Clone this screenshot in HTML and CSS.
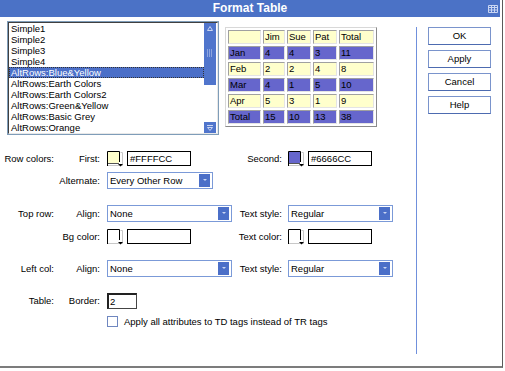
FILE: index.html
```html
<!DOCTYPE html>
<html lang="en">
<head>
  <meta charset="UTF-8">
  <title>Format Table</title>
  <link rel="stylesheet" href="styles.css">
</head>
<body>

  <div class="dialog">
    <!-- Title bar -->
    <div class="titlebar">
      <span class="title">Format Table</span>
      <svg class="grip" width="10" height="8" viewBox="0 0 10 8">
        <path d="M0.5 0.5h9v7h-9z M3.5 0.5v7 M6.5 0.5v7 M0.5 2.5h9 M0.5 5h9" fill="none" stroke="#c9d5f2" stroke-width="1"/>
      </svg>
    </div>

    <div class="body">
      <div class="main">
        <div class="top">
          <!-- Style list -->
          <div class="listbox">
            <div class="list-inner">
              <ul class="items">
                <li>Simple1</li>
                <li>Simple2</li>
                <li>Simple3</li>
                <li>Simple4</li>
                <li class="selected">AltRows:Blue&amp;Yellow</li>
                <li>AltRows:Earth Colors</li>
                <li>AltRows:Earth Colors2</li>
                <li>AltRows:Green&amp;Yellow</li>
                <li>AltRows:Basic Grey</li>
                <li>AltRows:Orange</li>
              </ul>
              <div class="scrollbar">
                <div class="thumb">
                  <svg width="12" height="62" viewBox="0 0 12 62">
                    <path d="M3.5 7.5h5L6 3.5z" fill="none" stroke="#c9d5f2"/>
                    <path d="M3 27h6M3 29h6M3 31h6M3 33h6" stroke="#c9d5f2" stroke-dasharray="1 1"/>
                  </svg>
                </div>
                <div class="sb-down">
                  <svg width="12" height="11" viewBox="0 0 12 11">
                    <path d="M3 3.5h6" stroke="#c9d5f2"/>
                    <path d="M3.5 5.5h5L6 8.5z" fill="none" stroke="#c9d5f2"/>
                  </svg>
                </div>
              </div>
            </div>
          </div>

          <!-- Preview -->
          <table class="preview">
            <tr class="yellow">
              <td class="c1"></td><td class="c2">Jim</td><td class="c3">Sue</td><td class="c4">Pat</td><td class="c5">Total</td>
            </tr>
            <tr class="purple"><td>Jan</td><td>4</td><td>4</td><td>3</td><td>11</td></tr>
            <tr class="yellow"><td>Feb</td><td>2</td><td>2</td><td>4</td><td>8</td></tr>
            <tr class="purple"><td>Mar</td><td>4</td><td>1</td><td>5</td><td>10</td></tr>
            <tr class="yellow"><td>Apr</td><td>5</td><td>3</td><td>1</td><td>9</td></tr>
            <tr class="purple"><td>Total</td><td>15</td><td>10</td><td>13</td><td>38</td></tr>
          </table>
        </div>

        <!-- Settings -->
        <div class="form">
          <div class="row r1">
            <span class="sec">Row colors:</span>
            <span class="lbl">First:</span>
            <span class="ctl">
              <span class="swatch"><svg width="17" height="16" viewBox="0 0 17 16"><rect x="1" y="1" width="11" height="11" fill="#FFFFCC"/><path d="M0.5 15V0.5H12.5V11" fill="none" stroke="#000"/><path d="M1 12.5h11" stroke="#555"/><path d="M13.5 1.5H15.5V14.5H1" fill="none" stroke="#c8c8c8"/><path d="M11 13h5l-2.5 2.5z" fill="#000"/></svg></span>
              <span class="hex">#FFFFCC</span>
            </span>
            <span class="lbl">Second:</span>
            <span class="ctl ctl2">
              <span class="swatch"><svg width="17" height="16" viewBox="0 0 17 16"><rect x="1" y="1" width="11" height="11" fill="#6666CC"/><path d="M0.5 15V0.5H12.5V11" fill="none" stroke="#000"/><path d="M1 12.5h11" stroke="#555"/><path d="M13.5 1.5H15.5V14.5H1" fill="none" stroke="#c8c8c8"/><path d="M11 13h5l-2.5 2.5z" fill="#000"/></svg></span>
              <span class="hex">#6666CC</span>
            </span>
          </div>

          <div class="row r2">
            <span class="sec"></span>
            <span class="lbl">Alternate:</span>
            <span class="ctl">
              <span class="select w-alt">Every Other Row<span class="arrow"></span></span>
            </span>
          </div>

          <div class="row r3">
            <span class="sec">Top row:</span>
            <span class="lbl">Align:</span>
            <span class="ctl"><span class="select w-align">None<span class="arrow"></span></span></span>
            <span class="lbl">Text style:</span>
            <span class="ctl ctl2"><span class="select w-style">Regular<span class="arrow"></span></span></span>
          </div>

          <div class="row r4">
            <span class="sec"></span>
            <span class="lbl">Bg color:</span>
            <span class="ctl">
              <span class="swatch"><svg width="17" height="16" viewBox="0 0 17 16"><path d="M0.5 15V0.5H12.5V11" fill="none" stroke="#000"/><path d="M13.5 1.5H15.5V14.5H1" fill="none" stroke="#c8c8c8"/><path d="M11 13h5l-2.5 2.5z" fill="#000"/></svg></span>
              <span class="hex"></span>
            </span>
            <span class="lbl">Text color:</span>
            <span class="ctl ctl2">
              <span class="swatch"><svg width="17" height="16" viewBox="0 0 17 16"><path d="M0.5 15V0.5H12.5V11" fill="none" stroke="#000"/><path d="M13.5 1.5H15.5V14.5H1" fill="none" stroke="#c8c8c8"/><path d="M11 13h5l-2.5 2.5z" fill="#000"/></svg></span>
              <span class="hex"></span>
            </span>
          </div>

          <div class="row r5">
            <span class="sec">Left col:</span>
            <span class="lbl">Align:</span>
            <span class="ctl"><span class="select w-align">None<span class="arrow"></span></span></span>
            <span class="lbl">Text style:</span>
            <span class="ctl ctl2"><span class="select w-style">Regular<span class="arrow"></span></span></span>
          </div>

          <div class="row r6">
            <span class="sec">Table:</span>
            <span class="lbl">Border:</span>
            <span class="ctl"><span class="border-input">2</span></span>
          </div>

          <div class="row r7">
            <span class="sec"></span>
            <span class="lbl"></span>
            <span class="ctl wide"><span class="check"></span>Apply all attributes to TD tags instead of TR tags</span>
          </div>
        </div>
      </div>

      <div class="sep"></div>

      <!-- Buttons -->
      <div class="buttons">
        <div class="btn">OK</div>
        <div class="btn">Apply</div>
        <div class="btn">Cancel</div>
        <div class="btn">Help</div>
      </div>
    </div>
  </div>

</body>
</html>
```

FILE: styles.css
```css
body {
  margin: 0;
  background-color: #fff;
  font-family: "Liberation Sans", Arial, sans-serif;
  font-size: 9.5px;
  line-height: 11px;
  color: #000;
}
.dialog {
  width: 502px;
  height: 366px;
  border-right: 1px solid #5a5a5a;
  border-bottom: 2px solid #7c7c7c;
  background-color: #fff;
}
.titlebar {
  height: 17px;
  margin-right: 2px;
  background-color: #4b72c6;
  color: white;
  display: grid;
  grid-template-columns: 1fr auto 1fr;
  align-items: center;
}
.title {
  grid-column: 2;
  font-weight: bold;
  font-size: 12px;
}
.grip {
  grid-column: 3;
  justify-self: end;
  margin-right: 2px;
}
.body {
  display: flex;
}
.main {
  width: 416px;
  padding-top: 4px;
}
.top {
  display: flex;
  align-items: flex-start;
  margin-left: 7px;
}

/* List box */
.listbox {
  width: 212px;
  height: 114px;
  box-sizing: border-box;
  border: 1px solid #7f9db9;
}
.list-inner {
  height: 100%;
  box-sizing: border-box;
  border-top: 1px solid #404040;
  border-left: 1px solid #404040;
  border-right: 1px solid #e8e8e8;
  border-bottom: 1px solid #e8e8e8;
  display: flex;
}
.items {
  flex: 1;
  list-style: none;
  margin: 0;
  padding: 0;
}
.items li {
  height: 11px;
  line-height: 11px;
  padding-left: 2px;
  white-space: nowrap;
}
.items li.selected {
  background-color: #4b6fc8;
  color: white;
  outline: 1px dotted #333;
  outline-offset: -1px;
}
.scrollbar {
  width: 12px;
  margin-right: 1px;
  display: flex;
  flex-direction: column;
  justify-content: space-between;
}
.thumb {
  height: 62px;
  background-color: #5075cc;
}
.sb-down {
  height: 11px;
  background-color: #5075cc;
}
.thumb svg, .sb-down svg {
  display: block;
}

/* Preview table */
.preview {
  margin-left: 6px;
  margin-top: 6px;
  border-collapse: separate;
  border-spacing: 2px;
  border: 1px solid;
  border-color: #d8d8d8 #8a8a8a #8a8a8a #d8d8d8;
}
.preview td {
  height: 14px;
  box-sizing: border-box;
  padding: 0 0 0 1px;
  border: 1px solid;
  border-color: #a0a0a0 #e4e4e4 #e4e4e4 #a0a0a0;
  line-height: 12px;
}
.preview .c1 { width: 33px; }
.preview .c2 { width: 22px; }
.preview .c3 { width: 24px; }
.preview .c4 { width: 24px; }
.preview .c5 { width: 35px; }
.yellow td {
  background-color: #FFFFCC;
}
.purple td {
  background-color: #6666CC;
}

/* Form rows */
.form {
  margin-top: 15px;
}
.row {
  display: grid;
  grid-template-columns: 54px 46px 132px 50px 1fr;
  height: 17px;
  align-items: center;
}
.row.r2 { margin-top: 5px; }
.row.r3 { margin-top: 16px; }
.row.r4 { margin-top: 6px; }
.row.r5 { margin-top: 15px; }
.row.r6 { margin-top: 15px; }
.row.r7 { margin-top: 4px; }
.sec, .lbl {
  text-align: right;
  white-space: nowrap;
}
.ctl {
  margin-left: 7px;
  display: flex;
  align-items: center;
  gap: 3px;
}
.ctl2 {
  margin-left: 6px;
}
.ctl.wide {
  grid-column: 3 / 6;
  gap: 6px;
  white-space: nowrap;
}
.swatch svg {
  display: block;
}
.hex {
  width: 64px;
  height: 15px;
  box-sizing: border-box;
  border: 1px solid #000;
  padding-left: 2px;
  line-height: 13px;
}
.select {
  height: 17px;
  box-sizing: border-box;
  border: 1px solid #7b9ad8;
  display: flex;
  align-items: center;
  padding-left: 2px;
  background-color: #fff;
}
.select .arrow {
  margin-left: auto;
  margin-right: 2px;
  width: 11px;
  height: 13px;
  background-color: #4b6fc8;
  position: relative;
}
.select .arrow::after {
  content: "";
  position: absolute;
  left: 4px;
  top: 5px;
  border-left: 2px solid transparent;
  border-right: 2px solid transparent;
  border-top: 2px solid #c9d5f2;
}
.w-alt { width: 106px; }
.w-align { width: 126px; }
.w-style { width: 105px; }
.border-input {
  width: 30px;
  height: 16px;
  box-sizing: border-box;
  border-top: 2px solid #222;
  border-left: 2px solid #222;
  border-right: 1px solid #444;
  border-bottom: 1px solid #444;
  padding-left: 1px;
  line-height: 13px;
}
.check {
  width: 11px;
  height: 11px;
  box-sizing: border-box;
  border: 1px solid #6f87c0;
  background-color: #fff;
}

/* Separator and buttons */
.sep {
  width: 1px;
  height: 327px;
  margin-top: 10px;
  background-color: #7090dc;
}
.buttons {
  margin-left: 11px;
  margin-top: 10px;
  display: flex;
  flex-direction: column;
  gap: 5px;
}
.btn {
  width: 63px;
  height: 18px;
  box-sizing: border-box;
  border: 1px solid #7a94cc;
  border-bottom-color: #4d6bb0;
  text-align: center;
  line-height: 16px;
}
```
